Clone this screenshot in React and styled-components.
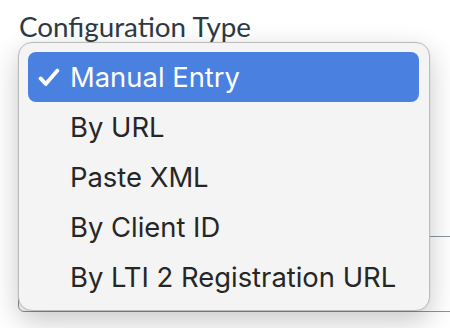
import styled, { createGlobalStyle } from "styled-components"

const Global = createGlobalStyle`
  html, body { margin: 0; padding: 0; background: #fff; }
  body { width: 450px; height: 328px; overflow: hidden; }
`;

const Page = styled.div`
  position: relative;
  padding: 12px 0 0 18px;
  height: 328px;
  box-sizing: border-box;
`;

const Label = styled.div`
  font-family: 'Lato', sans-serif;
  font-size: 27.8px;
  line-height: 30px;
  color: #2d3b45;
  padding-left: 1px;
`;

const Field = styled.div`
  position: relative;
`;

const SelectBox = styled.div`
  height: 194px;
`;

const TextBox = styled.div`
  height: 74px;
  margin-right: -20px;
  border: 1px solid #8b929c;
  border-radius: 6px;
`;

const Menu = styled.ul`
  position: absolute;
  top: 0;
  left: 0;
  width: 412px;
  box-sizing: border-box;
  margin: 0;
  padding: 9px 10px 8px 9px;
  list-style: none;
  background: #f4f4f4;
  border: 1px solid #bcbcbc;
  border-radius: 14px;
  box-shadow: 0 10px 28px rgba(0, 0, 0, 0.22), 0 0 0 0.5px rgba(0,0,0,0.05);
`;

const Item = styled.li`
  display: flex;
  align-items: center;
  height: 50px;
  padding-left: 10px;
  border-radius: 8px;
  font-family: 'Inter', 'Noto Sans', sans-serif;
  font-size: 27.4px;
  color: ${p => (p.$selected ? "#fff" : "#262626")};
  background: ${p => (p.$selected ? "#4a81e0" : "transparent")};
`;

const Check = styled.span`
  width: 32px;
  display: flex;
  align-items: center;
`;

const options = [
  "Manual Entry",
  "By URL",
  "Paste XML",
  "By Client ID",
  "By LTI 2 Registration URL",
];

export default function App() {
  return (
    <>
      <Global />
      <Page>
        <Label>Configuration Type</Label>
        <Field>
          <SelectBox />
          <TextBox />
          <Menu>
            {options.map((o, i) => (
              <Item key={o} $selected={i === 0}>
                <Check>
                  {i === 0 && (
                    <svg width="22" height="19" viewBox="0 0 22 19">
                      <path d="M2.6 10.4 L7.8 16 L19.4 2.6" fill="none" stroke="#fff" strokeWidth="3.8" strokeLinecap="round" strokeLinejoin="round" />
                    </svg>
                  )}
                </Check>
                {o}
              </Item>
            ))}
          </Menu>
        </Field>
      </Page>
    </>
  );
}
